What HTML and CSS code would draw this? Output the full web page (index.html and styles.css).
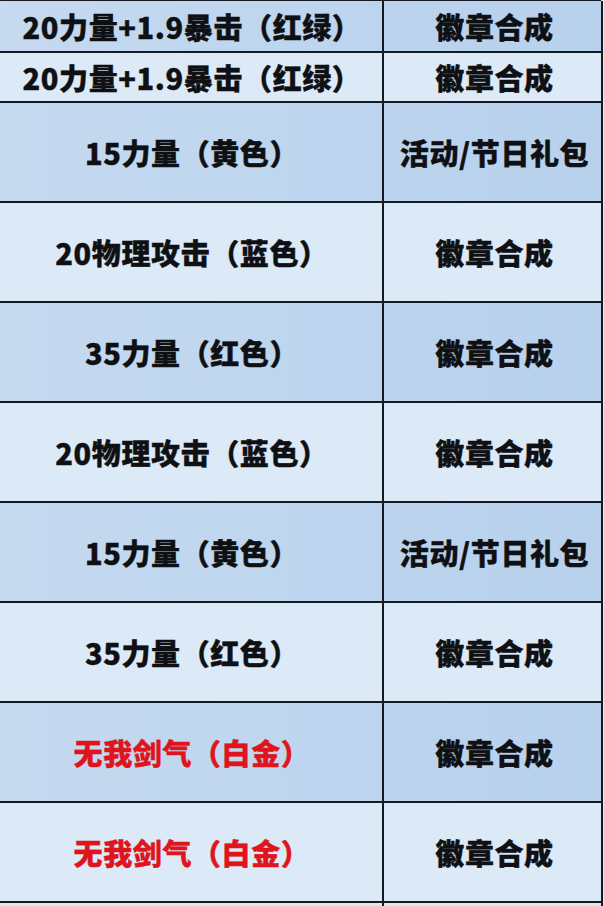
FILE: index.html
```html
<!DOCTYPE html>
<html lang="zh">
<head>
<meta charset="utf-8">
<link rel="stylesheet" href="styles.css">
</head>
<body>
<div class="table">
  <div class="row blue short"><div class="cell left">20力量+1.9暴击（红绿）</div><div class="cell right">徽章合成</div></div>
  <div class="row light short2"><div class="cell left">20力量+1.9暴击（红绿）</div><div class="cell right">徽章合成</div></div>
  <div class="row blue"><div class="cell left">15力量（黄色）</div><div class="cell right">活动/节日礼包</div></div>
  <div class="row light"><div class="cell left">20物理攻击（蓝色）</div><div class="cell right">徽章合成</div></div>
  <div class="row blue"><div class="cell left">35力量（红色）</div><div class="cell right">徽章合成</div></div>
  <div class="row light"><div class="cell left">20物理攻击（蓝色）</div><div class="cell right">徽章合成</div></div>
  <div class="row blue"><div class="cell left">15力量（黄色）</div><div class="cell right">活动/节日礼包</div></div>
  <div class="row light"><div class="cell left">35力量（红色）</div><div class="cell right">徽章合成</div></div>
  <div class="row blue"><div class="cell left red">无我剑气（白金）</div><div class="cell right">徽章合成</div></div>
  <div class="row light"><div class="cell left red">无我剑气（白金）</div><div class="cell right">徽章合成</div></div>
  <div class="row green"><div class="cell left"></div><div class="cell right"></div></div>
</div>
</body>
</html>
```

FILE: styles.css
```css
html, body {
  margin: 0;
  padding: 0;
  width: 604px;
  height: 906px;
  overflow: hidden;
  background: #dce9f6;
}

.table {
  margin-left: -16px;
  margin-top: -1px;
  width: 615px;
  border-top: 2px solid #141922;
  border-left: 2px solid #141922;
  font-family: "Noto Sans CJK SC", "Noto Sans", sans-serif;
  font-weight: 900;
  font-size: 29px;
  color: #0f1013;
}

.row {
  display: grid;
  grid-template-columns: 398px 219px;
  height: 100px;
}

.row.short {
  height: 52px;
}

.row.short2 {
  height: 50px;
}

.cell {
  display: flex;
  align-items: center;
  justify-content: center;
  border-right: 2px solid #141922;
  border-bottom: 2px solid #141922;
  white-space: nowrap;
  letter-spacing: 0.6px;
  -webkit-text-stroke: 0.4px currentColor;
}

.left {
  padding-left: 16px;
}

.right {
  padding-left: 4px;
}

.blue {
  background: linear-gradient(90deg, #c6daf0 0%, #bdd5ee 55%, #b7d0ec 100%);
}

.light {
  background: #dce9f6;
}

.green {
  background: #d9ece4;
}

.red {
  color: #e0141c;
}
```
